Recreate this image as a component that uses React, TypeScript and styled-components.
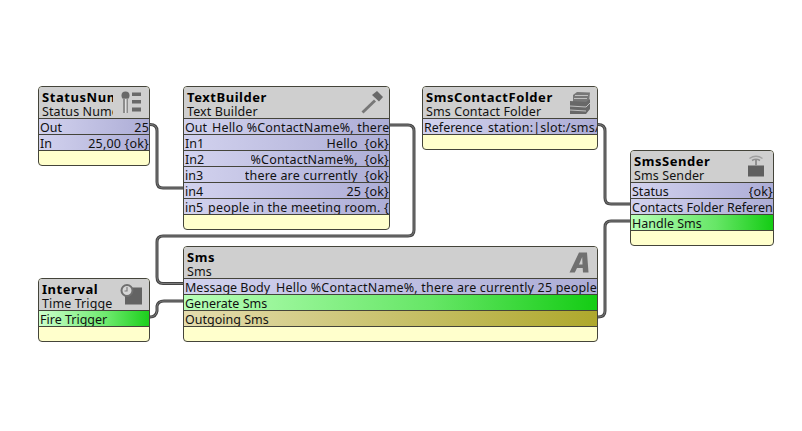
import React from 'react';
import styled, { createGlobalStyle, css } from 'styled-components';

type RowKind = 'slot' | 'action' | 'topic' | 'fire';

interface RowData {
	kind?: RowKind,
	label: string,
	value?: string
}

interface NodeData {
	x: number,
	y: number,
	w: number,
	h: number,
	title: string,
	subtitle: string,
	icon: React.ReactNode,
	rows: RowData[]
}

const GlobalStyle = createGlobalStyle`
	html, body {
		margin: 0;
		padding: 0;
		background: #ffffff;
	}
	body {
		font-family: "Noto Sans", "Open Sans", sans-serif;
	}
`;

const Canvas = styled.div`
	position: relative;
	width: 802px;
	height: 431px;
	overflow: hidden;
	background: #ffffff;
`;

const Wires = styled.svg`
	position: absolute;
	left: 0;
	top: 0;
`;

const Card = styled.div<{ $x: number, $y: number, $w: number, $h: number }>`
	position: absolute;
	left: ${(p) => p.$x}px;
	top: ${(p) => p.$y}px;
	width: ${(p) => p.$w}px;
	height: ${(p) => p.$h}px;
	box-sizing: border-box;
	display: flex;
	flex-direction: column;
	overflow: hidden;
	background: #ffffcc;
	border: 1px solid #44443a;
	border-radius: 4px;
	color: #111111;
	font-size: 12.5px;
	line-height: 15px;
`;

const Header = styled.div`
	flex: none;
	height: 31px;
	display: flex;
	justify-content: space-between;
	background: #cfcfcf;
	border-bottom: 1px solid #44443a;
`;

const Titles = styled.div`
	flex: 1;
	min-width: 0;
	margin-right: 1px;
	padding: 3px 0 0 3px;
	overflow: hidden;
	white-space: nowrap;
`;

const Title = styled.div`
	font-size: 13px;
	font-weight: 700;
	letter-spacing: 0.55px;
	color: #000000;
	height: 14px;
`;

const Subtitle = styled.div`
	height: 14px;
	letter-spacing: 0.1px;
`;

const IconSlot = styled.div`
	flex: none;
	width: 35px;
	height: 31px;
	padding-right: 1px;
	box-sizing: border-box;
	display: flex;
	align-items: center;
	justify-content: center;

	svg {
		flex: none;
		filter: blur(0.4px);
	}
`;

const rowFills = {
	slot: css`background: linear-gradient(to right, #d2d2ee, #adadd6);`,
	action: css`background: linear-gradient(to right, #b8ffb8, #66e666 60%, #14cc14);`,
	topic: css`background: linear-gradient(to right, #e4dcae, #aea82c);`,
	fire: css`background: linear-gradient(to right, #ccffcc, #70ea70 60%, #1ccf1c);`
};

const Row = styled.div<{ $kind: RowKind }>`
	flex: none;
	height: 14px;
	display: flex;
	justify-content: space-between;
	gap: 5px;
	padding: 1px 0 0 1px;
	overflow: hidden;
	white-space: nowrap;
	border-bottom: 1px solid #44443a;
	${(p) => rowFills[p.$kind]}
`;

const Label = styled.span`
	flex: none;
`;

const Value = styled.span`
	flex: 0 1 auto;
	min-width: 0;
	overflow: hidden;
	white-space: pre;
	letter-spacing: 0.18px;
`;

const Glyph = ({ children }: { children: React.ReactNode }) => (
	<svg width='28' height='26' viewBox='0 0 28 26' fill='#696969'>{children}</svg>
);

const icons = {
	status: <Glyph>
		<circle cx='8.5' cy='5.5' r='4'/>
		<rect x='6' y='8' width='5' height='15' fill='#8c8c8c'/>
		<rect x='8' y='9' width='1.5' height='14' fill='#e0e0e0'/>
		<rect x='15' y='2.5' width='9' height='3.5'/>
		<rect x='15' y='10' width='9' height='3.5'/>
		<rect x='15' y='17.5' width='9' height='4'/>
	</Glyph>,
	hammer: <Glyph>
		<path d='M6.5 23.5 L4.5 21.5 L17 9.5 L19 11.5 Z' fill='#777777'/>
		<path d='M15 5 L20 1 L26 7 L22 11.5 Z'/>
	</Glyph>,
	folder: <Glyph>
		<path d='M8 5 L12 2 L25 2.5 L24 12 L8 12 Z' fill='#777777'/>
		<path d='M10 5.5 L23 5.5 M9 8.5 L22 8.5' stroke='#c0c0c0' strokeWidth='1'/>
		<path d='M5 11 L21 12 L25 9 L25 19 L21 24 L5 24 Z' fill='#686868'/>
		<path d='M5 16 L21 17 L25 13 M5 20 L21 21' stroke='#c0c0c0' strokeWidth='1' fill='none'/>
	</Glyph>,
	sender: <Glyph>
		<rect x='7' y='11.5' width='16' height='11' fill='#606060'/>
		<rect x='14' y='6' width='2' height='6' fill='#909090'/>
		<path d='M8.5 4.5 Q15 0 21.5 4.5' stroke='#a0a0a0' strokeWidth='1.5' fill='none'/>
		<path d='M11 6.5 Q15 4 19 6.5' stroke='#909090' strokeWidth='1.5' fill='none'/>
	</Glyph>,
	clock: <Glyph>
		<rect x='8' y='5.5' width='17' height='17' fill='#636363'/>
		<circle cx='10' cy='8.5' r='5.5' fill='#d6d6d6' stroke='#6f6f6f' strokeWidth='2'/>
		<path d='M10 5 L10 9 L7.5 9' stroke='#808080' strokeWidth='1.2' fill='none'/>
	</Glyph>,
	letter: <Glyph>
		<path d='M4.5 22.5 L14 2.5 L22 2.5 L23.5 22.5 L18 22.5 L17.7 18 L12 18 L9.8 22.5 Z M14 14.5 L17.5 14.5 L17.2 7 Z' fillRule='evenodd' fill='#707070'/>
	</Glyph>
};

const nodes: NodeData[] = [
	{
		x: 38, y: 86, w: 112, h: 80, title: 'StatusNumeric', subtitle: 'Status Numeric', icon: icons.status,
		rows: [{ label: 'Out', value: '25' }, { label: 'In', value: '25,00 {ok}' }]
	},
	{
		x: 183, y: 86, w: 207, h: 144, title: 'TextBuilder', subtitle: 'Text Builder', icon: icons.hammer,
		rows: [
			{ label: 'Out', value: 'Hello %ContactName%, there are currently 25 people' },
			{ label: 'In1', value: 'Hello  {ok}' },
			{ label: 'In2', value: '%ContactName%,  {ok}' },
			{ label: 'in3', value: 'there are currently  {ok}' },
			{ label: 'in4', value: '25 {ok}' },
			{ label: 'in5', value: 'people in the meeting room. {ok}' }
		]
	},
	{
		x: 422, y: 86, w: 176, h: 64, title: 'SmsContactFolder', subtitle: 'Sms Contact Folder', icon: icons.folder,
		rows: [{ label: 'Reference', value: 'station:|slot:/sms/contacts' }]
	},
	{
		x: 630, y: 150, w: 144, h: 96, title: 'SmsSender', subtitle: 'Sms Sender', icon: icons.sender,
		rows: [
			{ label: 'Status', value: '{ok}' },
			{ label: 'Contacts Folder Reference' },
			{ kind: 'action', label: 'Handle Sms' }
		]
	},
	{
		x: 38, y: 278, w: 112, h: 64, title: 'Interval', subtitle: 'Time Trigger', icon: icons.clock,
		rows: [{ kind: 'fire', label: 'Fire Trigger' }]
	},
	{
		x: 183, y: 246, w: 415, h: 96, title: 'Sms', subtitle: 'Sms', icon: icons.letter,
		rows: [
			{ label: 'Message Body', value: 'Hello %ContactName%, there are currently 25 people' },
			{ kind: 'action', label: 'Generate Sms' },
			{ kind: 'topic', label: 'Outgoing Sms' }
		]
	}
];

const wirePaths = [
	'M150 124.5 Q157 124.5 157 131 L157 182 Q157 188 163 188 L183 188',
	'M390 125 L408 125 Q414 125 414 131 L414 230 Q414 236 408 236 L163 236 Q157 236 157 242 L157 277 Q157 283.5 163 283.5 L183 283.5',
	'M150 317 Q156 317 157 311 L157 306 Q158 301 164 301 L183 301',
	'M598 124.5 Q605 124.5 605 131 L605 198 Q605 204 611 204 L630 204',
	'M598 317 Q605 317 605 311 L605 227 Q605 221 611 221 L630 221'
];

const App = () => (
	<Canvas>
		<GlobalStyle/>
		<Wires width='802' height='431' fill='none'>
			{wirePaths.map((d) => <path key={d} d={d} stroke='#454545' strokeWidth='3'/>)}
			{wirePaths.map((d) => <path key={`${d}-core`} d={d} stroke='#7c7c7c' strokeWidth='1'/>)}
		</Wires>
		{nodes.map((node) => (
			<Card key={node.title} $x={node.x} $y={node.y} $w={node.w} $h={node.h}>
				<Header>
					<Titles>
						<Title>{node.title}</Title>
						<Subtitle>{node.subtitle}</Subtitle>
					</Titles>
					<IconSlot>{node.icon}</IconSlot>
				</Header>
				{node.rows.map((row) => (
					<Row key={row.label} $kind={row.kind || 'slot'}>
						<Label>{row.label}</Label>
						{row.value && <Value>{row.value}</Value>}
					</Row>
				))}
			</Card>
		))}
	</Canvas>
);

export default App;
